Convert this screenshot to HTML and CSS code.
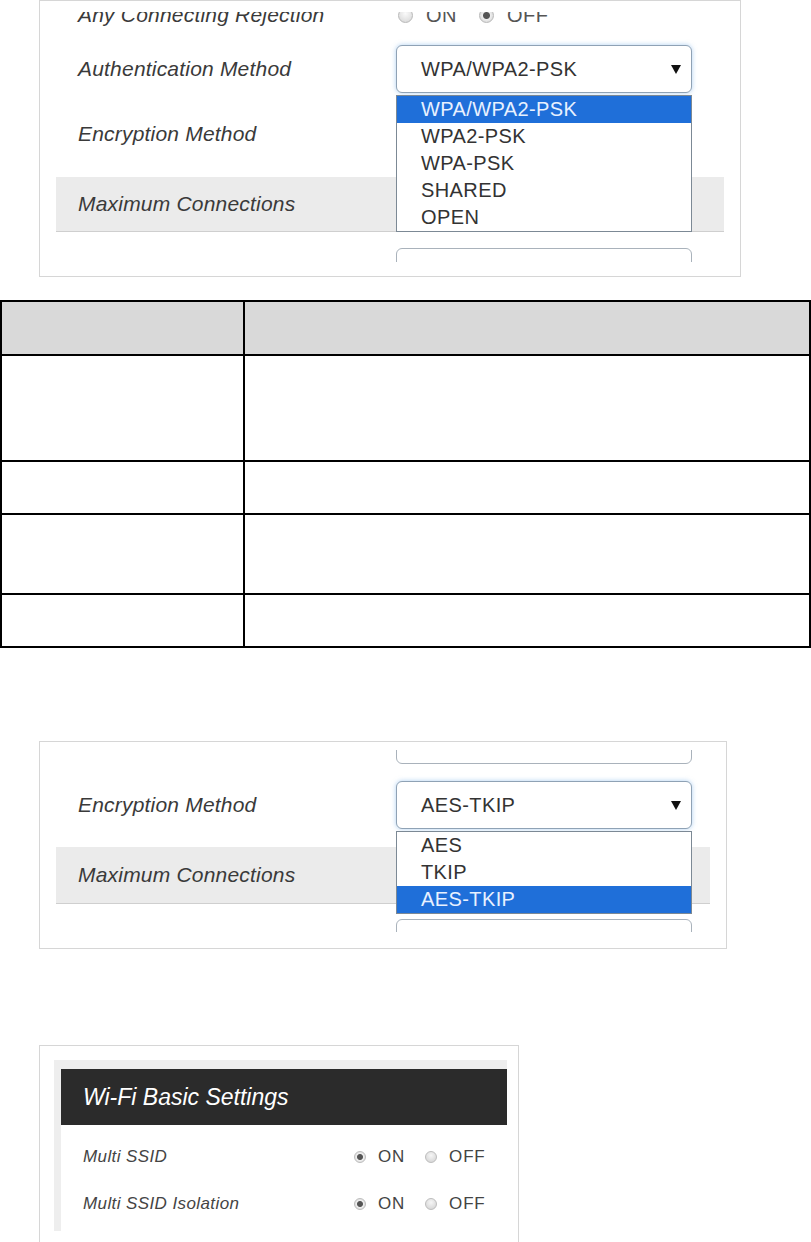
FILE: index.html
```html
<!DOCTYPE html>
<html>
<head>
<meta charset="utf-8">
<title>Wi-Fi settings</title>
<link rel="stylesheet" href="styles.css">
</head>
<body>
<div class="shot shot-auth">
  <div class="form">
    <div class="row row-any">
      <span class="label">Any Connecting Rejection</span>
      <div class="radios">
        <span class="radio"></span><span class="opt">ON</span>
        <span class="radio checked"></span><span class="opt">OFF</span>
      </div>
    </div>
    <div class="row row-auth">
      <span class="label">Authentication Method</span>
      <div class="select focus"><span class="val">WPA/WPA2-PSK</span><svg class="arrow" width="10" height="9" viewBox="0 0 10 9"><polygon points="0,0 10,0 5,9" fill="#111"/></svg></div>
    </div>
    <div class="row row-enc">
      <span class="label">Encryption Method</span>
      <div class="select"></div>
    </div>
    <div class="row gray row-max">
      <span class="label">Maximum Connections</span>
    </div>
    <div class="row row-input row-input-a">
      <span class="label"></span>
      <div class="select"></div>
    </div>
  </div>
  <ul class="dropdown dd-auth">
    <li class="sel">WPA/WPA2-PSK</li>
    <li>WPA2-PSK</li>
    <li>WPA-PSK</li>
    <li>SHARED</li>
    <li>OPEN</li>
  </ul>
</div>

<table class="param">
  <tr class="th"><td class="c1"></td><td class="c2"></td></tr>
  <tr class="r1"><td></td><td></td></tr>
  <tr class="r2"><td></td><td></td></tr>
  <tr class="r3"><td></td><td></td></tr>
  <tr class="r4"><td></td><td></td></tr>
</table>

<div class="shot shot-enc">
  <div class="form">
    <div class="row row-prev">
      <span class="label"></span>
      <div class="select"></div>
    </div>
    <div class="row row-enc2">
      <span class="label">Encryption Method</span>
      <div class="select focus"><span class="val">AES-TKIP</span><svg class="arrow" width="10" height="9" viewBox="0 0 10 9"><polygon points="0,0 10,0 5,9" fill="#111"/></svg></div>
    </div>
    <div class="row gray row-max2">
      <span class="label">Maximum Connections</span>
    </div>
    <div class="row row-input row-input-b">
      <span class="label"></span>
      <div class="select"></div>
    </div>
  </div>
  <ul class="dropdown dd-enc">
    <li>AES</li>
    <li>TKIP</li>
    <li class="sel">AES-TKIP</li>
  </ul>
</div>

<div class="shot shot-basic">
  <div class="frame">
    <div class="card">
      <div class="card-head">Wi-Fi Basic Settings</div>
      <div class="card-body">
        <div class="srow">
          <span class="slabel">Multi SSID</span>
          <span class="sradio checked"></span><span class="sopt">ON</span>
          <span class="sradio"></span><span class="sopt">OFF</span>
        </div>
        <div class="srow">
          <span class="slabel">Multi SSID Isolation</span>
          <span class="sradio checked"></span><span class="sopt">ON</span>
          <span class="sradio"></span><span class="sopt">OFF</span>
        </div>
      </div>
    </div>
  </div>
</div>
</body>
</html>
```

FILE: styles.css
```css
* { box-sizing: border-box; }
body {
  margin: 0;
  width: 811px;
  background: #fff;
  font-family: "Liberation Sans", Arial, sans-serif;
  color: #333;
}

.shot {
  position: relative;
  overflow: hidden;
  border: 1px solid #d6d6d6;
  background: #fff;
}
.shot-auth {
  margin-left: 39px;
  width: 702px;
  height: 277px;
}
.shot-enc {
  margin-top: 93px;
  margin-left: 39px;
  width: 688px;
  height: 208px;
}
.form {
  margin: 0 16px;
}
.row {
  display: flex;
  align-items: center;
  height: 54px;
  padding-left: 22px;
}
.label {
  flex: 0 0 318px;
  font-style: italic;
  font-size: 21px;
  letter-spacing: 0.2px;
  color: #3a3a3a;
}

/* first row is cropped at the top in the screenshot */
.row-any {
  margin-top: 11px;
  height: 15px;
  overflow: hidden;
  align-items: flex-end;
}
.row-any .label,
.row-any .radios { line-height: 24px; }
.row-auth { margin-top: 15px; }
.row-enc { margin-top: 11px; }
.row-max { margin-top: 16px; height: 55px; }
.row-input-a { margin-top: 16px; height: 14px; align-items: flex-start; overflow: hidden; }

.row-prev {
  margin-top: 8px;
  height: 14px;
  overflow: hidden;
  align-items: flex-end;
}
.row-enc2 { margin-top: 14px; }
.row-max2 { margin-top: 15px; height: 57px; }
.row-input-b { margin-top: 15px; height: 13px; align-items: flex-start; overflow: hidden; }

.gray {
  background: #ebebeb;
  border-bottom: 1px solid #cfcfcf;
}

.radios {
  display: flex;
  align-items: center;
  font-size: 20px;
  color: #555;
}
.radio {
  width: 15px;
  height: 15px;
  border-radius: 50%;
  border: 1px solid #b8b8b8;
  background: radial-gradient(circle at 50% 35%, #fafafa, #d4d4d4);
  margin-left: 2px;
  margin-right: 13px;
}
.radio.checked {
  background: radial-gradient(circle, #555 0 3px, #eee 4px, #ccc 100%);
  margin-left: 22px;
}
.opt { letter-spacing: 0.5px; }

.select {
  position: relative;
  display: flex;
  align-items: center;
  flex: 0 0 296px;
  width: 296px;
  height: 48px;
  border: 1px solid #a9b2bb;
  border-radius: 6px;
  background: #fff;
  padding-left: 24px;
}
.select.focus {
  border-color: #8fa2b5;
  box-shadow: 0 0 5px rgba(110, 170, 230, 0.55);
}
.val {
  font-size: 20px;
  letter-spacing: 0.4px;
  color: #333;
}
.arrow {
  margin-left: auto;
  margin-right: 10px;
}

.dropdown {
  position: absolute;
  left: 356px;
  width: 296px;
  margin: 0;
  padding: 0;
  list-style: none;
  border: 1px solid #7c8995;
  background: #fff;
}
.dd-auth { top: 94px; }
.dd-enc { top: 89px; }
.dropdown li {
  height: 27px;
  line-height: 27px;
  padding-left: 24px;
  font-size: 20px;
  letter-spacing: 0.4px;
  color: #333;
}
.dropdown li.sel {
  background: #1f6fd9;
  color: #e8f1ff;
}

.param {
  margin-top: 23px;
  width: 811px;
  border-collapse: collapse;
}
.param td {
  border: 2px solid #000;
  padding: 0;
}
.param .c1 { width: 243px; }
.param .th td { background: #d9d9d9; }
.param .th { height: 54px; }
.param .r1 { height: 106px; }
.param .r2 { height: 53px; }
.param .r3 { height: 80px; }
.param .r4 { height: 53px; }

.shot-basic {
  margin-top: 96px;
  margin-left: 39px;
  width: 480px;
  height: 199px;
  padding: 14px 11px 0 14px;
  border-bottom: none;
}
.frame {
  background: #eeeeee;
  padding: 9px 0 0 7px;
  height: 171px;
}
.card {
  background: #fff;
  height: 100%;
}
.card-head {
  height: 56px;
  background: #2b2b2b;
  color: #fff;
  font-style: italic;
  font-size: 23px;
  padding-left: 22px;
  display: flex;
  align-items: center;
}
.card-body {
  padding-top: 8px;
}
.srow {
  display: flex;
  align-items: center;
  height: 47px;
  padding-left: 22px;
  font-size: 17px;
  color: #444;
}
.slabel {
  flex: 0 0 271px;
  font-style: italic;
  letter-spacing: 0.4px;
}
.sradio {
  width: 12px;
  height: 12px;
  border-radius: 50%;
  border: 1px solid #bdbdbd;
  background: radial-gradient(circle at 50% 35%, #f6f6f6, #d0d0d0);
  margin-right: 12px;
}
.sradio.checked {
  background: radial-gradient(circle, #555 0 2.5px, #eee 3.5px, #cfcfcf 100%);
}
.sopt {
  letter-spacing: 0.8px;
  margin-right: 20px;
  color: #444;
}
```
